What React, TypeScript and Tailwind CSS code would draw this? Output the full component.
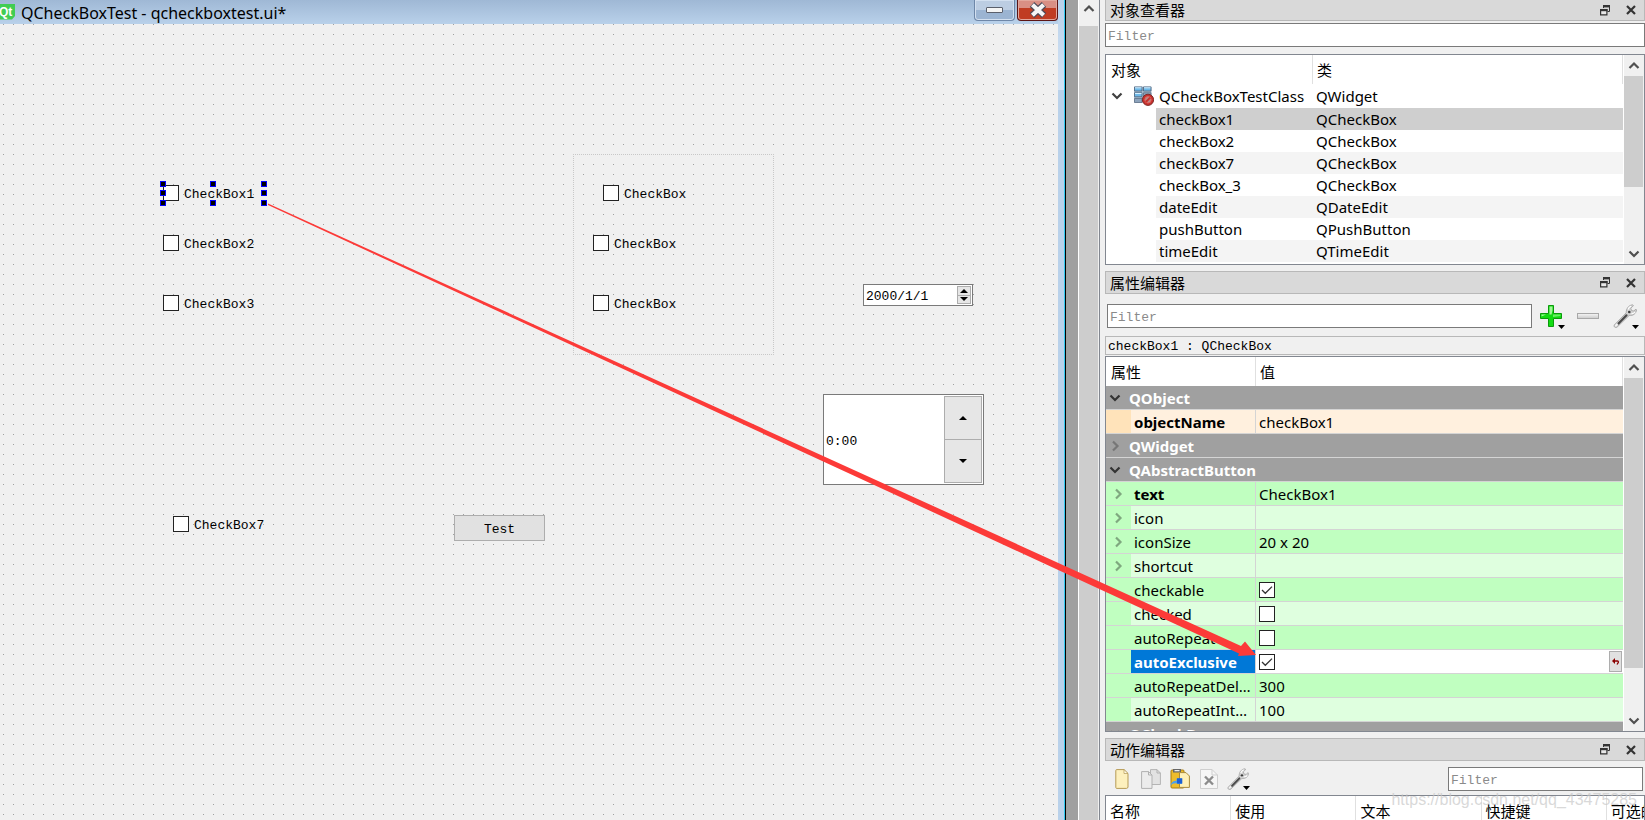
import type { ReactNode } from 'react'
import clsx from 'clsx'

const treeRows = [
    { name: 'checkBox1', cls: 'QCheckBox' },
    { name: 'checkBox2', cls: 'QCheckBox' },
    { name: 'checkBox7', cls: 'QCheckBox' },
    { name: 'checkBox_3', cls: 'QCheckBox' },
    { name: 'dateEdit', cls: 'QDateEdit' },
    { name: 'pushButton', cls: 'QPushButton' },
    { name: 'timeEdit', cls: 'QTimeEdit' },
]

interface PropertyRow {
    name: string
    value?: string
    checked?: boolean
    expandable?: boolean
    bold?: boolean
    selected?: boolean
}

const buttonProps: PropertyRow[] = [
    { name: 'text', value: 'CheckBox1', expandable: true, bold: true },
    { name: 'icon', expandable: true },
    { name: 'iconSize', value: '20 x 20', expandable: true },
    { name: 'shortcut', expandable: true },
    { name: 'checkable', checked: true },
    { name: 'checked', checked: false },
    { name: 'autoRepeat', checked: false },
    { name: 'autoExclusive', checked: true, selected: true },
    { name: 'autoRepeatDelay', value: '300' },
    { name: 'autoRepeatInterval', value: '100' },
]

const formCheckBoxes = [
    { id: 'cb1', label: 'CheckBox1', pos: 'left-[163px] top-[161px]' },
    { id: 'cb2', label: 'CheckBox2', pos: 'left-[163px] top-[211px]' },
    { id: 'cb3', label: 'CheckBox3', pos: 'left-[163px] top-[271px]' },
    { id: 'cb4', label: 'CheckBox', pos: 'left-[603px] top-[161px]' },
    { id: 'cb5', label: 'CheckBox', pos: 'left-[593px] top-[211px]' },
    { id: 'cb6', label: 'CheckBox', pos: 'left-[593px] top-[271px]' },
    { id: 'cb7', label: 'CheckBox7', pos: 'left-[173px] top-[492px]' },
]

const handles = [
    'left-[160px] top-[157px]',
    'left-[210px] top-[157px]',
    'left-[261px] top-[157px]',
    'left-[160px] top-[166px]',
    'left-[261px] top-[166px]',
    'left-[160px] top-[176px]',
    'left-[210px] top-[176px]',
    'left-[261px] top-[176px]',
]

const mono = "font-['Liberation_Mono',monospace] text-[13px]"

function Chevron({ dir, className }: { dir: 'up' | 'down' | 'right'; className?: string }) {
    const paths = {
        up: 'M1.5 8 6 3.5 10.5 8',
        down: 'M1.5 3.5 6 8 10.5 3.5',
        right: 'M4 1.5 8.5 6 4 10.5',
    }
    return (
        <svg viewBox="0 0 12 12" className={clsx('h-3 w-3 shrink-0', className)} aria-hidden="true">
            <path d={paths[dir]} fill="none" stroke="currentColor" strokeWidth="2.2" />
        </svg>
    )
}

function Tick({ id, checked, label }: { id?: string; checked?: boolean; label?: string }) {
    return (
        <span className="relative block h-4 w-4 shrink-0">
            <input
                id={id}
                type="checkbox"
                defaultChecked={checked}
                aria-label={label}
                className="peer block h-4 w-4 appearance-none border border-[#222] bg-white"
            />
            <svg
                viewBox="0 0 16 16"
                className="pointer-events-none absolute inset-0 hidden h-4 w-4 peer-checked:block"
                aria-hidden="true"
            >
                <path d="M3 8 6.3 11.3 13 4.6" fill="none" stroke="#333" strokeWidth="1.3" />
            </svg>
        </span>
    )
}

function ScrollBar({ thumb, end = true }: { thumb: string; end?: boolean }) {
    return (
        <div className="flex w-[21px] shrink-0 flex-col border-l border-white bg-[#f0f0f0] text-[#505050]">
            <button
                aria-label="Scroll up"
                className={clsx('flex shrink-0 justify-center', end ? 'h-[21px] items-center' : 'h-[26px] pt-[3px]')}
            >
                <Chevron dir="up" />
            </button>
            <div className="flex flex-1 flex-col">
                <div className={clsx('mr-px bg-[#cdcdcd]', thumb)} />
            </div>
            {end && (
                <button aria-label="Scroll down" className="flex h-[21px] shrink-0 items-center justify-center">
                    <Chevron dir="down" />
                </button>
            )}
        </div>
    )
}

function DockTitle({ title, first }: { title: string; first?: boolean }) {
    return (
        <div
            className={clsx(
                'flex shrink-0 items-center border border-[#b8b8b8] bg-[#d9d9d9] pr-2 pl-1',
                first ? 'h-[21px] border-t-0' : 'h-[23px]'
            )}
        >
            <h2 className="flex-1 text-[15px] leading-5">{title}</h2>
            <button aria-label="Float" className="mr-4">
                <svg viewBox="0 0 10 11" className="h-[11px] w-[10px]" aria-hidden="true">
                    <path d="M3.500 3V.8H9.500V6.500H7.500" fill="none" stroke="#333" strokeWidth="1" />
                    <path d="M3 0h7v2.400H3z" fill="#333" />
                    <path d="M.6 4.600h6.300v5.300H.6z" fill="#e8e8e8" stroke="#333" strokeWidth="1.200" />
                    <path d="M0 4h7.500v2.200H0z" fill="#333" />
                </svg>
            </button>
            <button aria-label="Close">
                <svg viewBox="0 0 10 10" className="h-[10px] w-[10px]" aria-hidden="true">
                    <path d="M1 1 9 9M9 1 1 9" stroke="#333" strokeWidth="2.2" />
                </svg>
            </button>
        </div>
    )
}

function FilterInput({ className }: { className?: string }) {
    return (
        <input
            type="text"
            placeholder="Filter"
            aria-label="Filter"
            className={clsx(
                mono,
                'h-6 min-w-0 border border-[#7a7a7a] bg-white pt-0.5 pl-0.5 outline-none placeholder:text-[#8a8a8a]',
                className
            )}
        />
    )
}

function DropArrow() {
    return (
        <svg viewBox="0 0 7 4" className="absolute right-1 bottom-0 h-1 w-[7px]" aria-hidden="true">
            <path d="M0 0h7L3.500 4z" fill="#000" />
        </svg>
    )
}

function ToolButton({ label, className, children }: { label: string; className: string; children: ReactNode }) {
    return (
        <button aria-label={label} className={clsx('relative flex h-[26px] items-center justify-center', className)}>
            {children}
        </button>
    )
}

function Wrench({ className }: { className: string }) {
    return (
        <svg viewBox="0 0 24 24" className={className} aria-hidden="true">
            <path
                d="M1.200 21 13.200 8.800C13 5 15.500 1.200 19.500.8L20.500 1.600 17.800 4.200 18.600 6.600 21 7 22.800 5 23.500 6C23.200 9.500 20 12 16.200 11.500L4 23.200C2.500 24.200.2 22.700 1.200 21z"
                fill="#d2d2d2"
                stroke="#9a9a9a"
                strokeWidth=".7"
            />
            <path d="M5.500 19.500 13.500 11.300" stroke="#4a4a4a" strokeWidth="2.200" strokeLinecap="round" />
            <path d="M2.800 21.600 4 20.400" stroke="#f6f6f6" strokeWidth="1.500" strokeLinecap="round" />
            <circle cx="16.300" cy="8" r="1.300" fill="#3a3a3a" />
            <path d="M15 5.500c.6-1.600 1.700-2.800 3.200-3.500M18.500 9.500c1.500.2 2.800-.4 3.600-1.500" fill="none" stroke="#fff" strokeWidth="1.200" />
        </svg>
    )
}

function SpinButtons({ className, arrow }: { className: string; arrow: string }) {
    return (
        <div className={clsx('flex shrink-0 flex-col border border-[#adadad] bg-[#e6e6e6]', className)}>
            <button aria-label="Step up" className="flex flex-1 items-center justify-center border-b border-[#adadad]">
                <svg viewBox="0 0 8 4" className={arrow} aria-hidden="true">
                    <path d="M0 4 4 0 8 4z" />
                </svg>
            </button>
            <button aria-label="Step down" className="flex flex-1 items-center justify-center">
                <svg viewBox="0 0 8 4" className={arrow} aria-hidden="true">
                    <path d="M0 0 4 4 8 0z" />
                </svg>
            </button>
        </div>
    )
}

function FormWindow() {
    return (
        <section className="flex min-w-0 flex-1 border-r border-black bg-[#b9d1ea]">
            <div className="flex min-w-0 flex-1 flex-col">
                <header className="flex h-6 shrink-0 items-start bg-linear-to-b from-[#9fb8d5] to-[#b9d1ea]">
                    <svg viewBox="0 0 15 16" className="mt-1 h-4 w-[15px]" aria-hidden="true">
                        <path d="M0 0h15v12l-3 3.500H0z" fill="#41cd52" />
                        <text x="-1" y="12" fontSize="12" fontWeight="700" fill="#fff" fontFamily="Liberation Sans">
                            Qt
                        </text>
                    </svg>
                    <h1 className="ml-1.5 flex-1 text-base leading-[26px]">QCheckBoxTest - qcheckboxtest.ui*</h1>
                    <button
                        aria-label="Minimize"
                        className="flex h-[21px] w-[41px] items-center justify-center rounded-b-sm border border-t-0 border-[#6e87a8] bg-linear-to-b from-[#bccde2] from-50% to-[#9bb4d2] to-50% shadow-[inset_0_0_0_1px_#d3e0f0]"
                    >
                        <span className="h-1.5 w-[17px] rounded-[1px] border border-[#5a5f6b] bg-[#f4f4f4]" />
                    </button>
                    <button
                        aria-label="Close"
                        className="ml-0.5 flex h-[21px] w-[41px] items-center justify-center rounded-b-sm border border-t-0 border-[#5b1414] bg-linear-to-b from-[#d98f84] from-40% to-[#c03c22] to-40% shadow-[inset_0_0_0_1px_#e2a89d]"
                    >
                        <svg viewBox="0 0 18 16" className="h-4 w-[18px]" aria-hidden="true">
                            <path d="M3 2.500 15 13.500M15 2.500 3 13.500" stroke="#4d4a58" strokeWidth="6.500" />
                            <path d="M3.400 2.800 14.600 13.200M14.600 2.800 3.400 13.200" stroke="#f5f5f5" strokeWidth="4.200" />
                        </svg>
                    </button>
                </header>

                <div
                    className={clsx(
                        mono,
                        'relative flex-1 bg-[#f0f0f0] bg-[linear-gradient(90deg,#f0f0f0_9px,transparent_9px),linear-gradient(#f0f0f0_9px,#a0a0a0_9px)] bg-size-[10px_10px] bg-position-[-6px_1px]'
                    )}
                >
                    <div className="absolute top-[130px] left-[573px] h-[201px] w-[201px] border border-dotted border-[#c8c8c8]" />
                    {formCheckBoxes.map((box) => (
                        <div key={box.id} className={clsx('absolute flex h-4 items-center gap-[5px]', box.pos)}>
                            <Tick id={box.id} />
                            <label htmlFor={box.id} className="pt-1">
                                {box.label}
                            </label>
                        </div>
                    ))}
                    {handles.map((pos) => (
                        <span key={pos} className={clsx('absolute h-1.5 w-1.5 border border-[#0000ff] bg-black', pos)} />
                    ))}

                    <div className="absolute top-[260px] left-[863px] flex h-[22px] w-[110px] border border-[#7a7a7a] bg-white p-px">
                        <input
                            type="text"
                            aria-label="Date"
                            defaultValue="2000/1/1"
                            className="min-w-0 flex-1 pt-1 pl-px outline-none"
                        />
                        <SpinButtons className="w-[14px]" arrow="h-1 w-2" />
                    </div>
                    <div className="absolute top-[370px] left-[823px] flex h-[91px] w-[161px] border border-[#7a7a7a] bg-white p-px">
                        <input
                            type="text"
                            aria-label="Time"
                            defaultValue="0:00"
                            className="min-w-0 flex-1 pt-1 pl-px outline-none"
                        />
                        <SpinButtons className="w-[38px]" arrow="h-1 w-2" />
                    </div>
                    <button className="absolute top-[491px] left-[454px] h-[26px] w-[91px] border border-[#adadad] bg-[#e1e1e1] pt-1">
                        Test
                    </button>
                </div>
            </div>
            <div className="w-[7px] shrink-0 border-r border-[#32c8f0] bg-linear-to-b from-[#b9d1ea] to-[#d3e3f5] bg-size-[100%_90px] bg-no-repeat" />
        </section>
    )
}

function ObjectInspector() {
    return (
        <>
            <DockTitle title="对象查看器" first />
            <FilterInput className="mt-0.5 shrink-0" />
            <div className="mt-[7px] flex h-[211px] shrink-0 overflow-hidden border border-[#828790] bg-white">
                <div className="min-w-0 flex-1">
                    <table className="w-full table-fixed border-separate border-spacing-0 text-[15px] leading-5">
                        <colgroup>
                            <col className="w-[50px]" />
                            <col className="w-[157px]" />
                            <col />
                        </colgroup>
                        <thead>
                            <tr className="h-[29px] text-left">
                                <th colSpan={2} className="border-r border-[#e0e0e0] pl-[5px] font-normal">
                                    对象
                                </th>
                                <th className="border-r border-[#e0e0e0] pl-1 font-normal">类</th>
                            </tr>
                        </thead>
                        <tbody>
                            <tr className="h-6">
                                <td>
                                    <div className="flex items-center justify-between pr-0.5 pl-[5px]">
                                        <Chevron dir="down" className="text-[#404040]" />
                                        <svg viewBox="0 0 20 20" className="h-5 w-5" aria-hidden="true">
                                            <path d="M0 .5h17.500v16H0z" fill="#a9bccf" />
                                            <g fill="#6fb9e8" stroke="#4c6178" strokeWidth=".8">
                                                <path d="M.5 1h7.500v4H.5zM9.500 1H17v4H9.500zM.5 6.800H8v4H.5z" />
                                            </g>
                                            <g fill="#8da3bb" stroke="#5d7086" strokeWidth=".8">
                                                <path d="M9.500 6.800H17v4H9.500zM.5 12.500H8v4H.5z" />
                                            </g>
                                            <path d="M1 1.800h6.500M10 1.800h6.500M1 7.500h6.500" stroke="#d6f0ff" />
                                            <circle cx="14" cy="13.800" r="5.600" fill="#c8302c" stroke="#7d2a28" />
                                            <circle cx="14" cy="13.800" r="3.200" fill="#b98a8a" stroke="#e0605a" strokeWidth="1" />
                                            <path d="m11.800 16 4.400-4.400" stroke="#c8302c" strokeWidth="2" />
                                        </svg>
                                    </div>
                                </td>
                                <td className="pl-[3px] whitespace-nowrap">QCheckBoxTestClass</td>
                                <td className="pl-[3px]">QWidget</td>
                            </tr>
                            {treeRows.map((row, i) => {
                                const bg = i === 0 ? 'bg-[#cfcfcf]' : i % 2 === 0 && 'bg-[#f4f4f4]'
                                return (
                                    <tr key={row.name} className="h-[22px]">
                                        <td />
                                        <td className={clsx('pl-[3px]', bg)}>{row.name}</td>
                                        <td className={clsx('pl-[3px]', bg)}>{row.cls}</td>
                                    </tr>
                                )
                            })}
                        </tbody>
                    </table>
                </div>
                <ScrollBar thumb="h-[111px]" />
            </div>
        </>
    )
}

function GroupRow({ name, open }: { name: string; open?: boolean }) {
    return (
        <tr className="h-6">
            <td colSpan={3} className="border-b border-[#d4d4d4] bg-[#a0a0a0]">
                <div className="flex items-center gap-2 pl-[3px] font-bold text-white">
                    <Chevron dir={open ? 'down' : 'right'} className={open ? 'text-[#333]' : 'text-[#777]'} />
                    {name}
                </div>
            </td>
        </tr>
    )
}

function PropertyEditor() {
    return (
        <>
            <div className="mt-1.5 shrink-0">
                <DockTitle title="属性编辑器" />
            </div>
            <div className="mt-[9px] flex shrink-0 items-center px-0.5">
                <FilterInput className="flex-1" />
                <ToolButton label="Add property" className="w-[37px]">
                    <svg viewBox="0 0 22 22" className="h-[22px] w-[22px]" aria-hidden="true">
                        <path d="M8.500.5h5v8h8v5h-8v8h-5v-8h-8v-5h8z" fill="#12dc12" stroke="#0b9a0b" />
                        <path d="M9.500 1.500h3v4l-1 4H6l-4.500 2V9.500h8z" fill="#a4f59a" />
                        <path d="M13 9.500h7.500V11L13 12z" fill="#6fee66" />
                    </svg>
                    <DropArrow />
                </ToolButton>
                <ToolButton label="Remove property" className="w-[37px]">
                    <span className="h-1.5 w-[22px] border border-[#a8a8a8] bg-linear-to-b from-[#f2f2f2] to-[#cfcfcf]" />
                </ToolButton>
                <ToolButton label="Configure" className="w-[37px]">
                    <Wrench className="h-6 w-6" />
                    <DropArrow />
                </ToolButton>
            </div>
            <div className={clsx(mono, 'mt-[7px] h-[19px] shrink-0 border border-[#b8b8b8] pl-0.5 leading-[19px] whitespace-pre')}>
                checkBox1 : QCheckBox
            </div>
            <div className="mt-px flex h-[376px] shrink-0 overflow-hidden border border-[#828790] bg-white">
                <div className="min-w-0 flex-1">
                    <table className="w-full table-fixed border-separate border-spacing-0 text-[15px] leading-5">
                        <colgroup>
                            <col className="w-[25px]" />
                            <col className="w-[125px]" />
                            <col />
                        </colgroup>
                        <thead>
                            <tr className="h-[29px] text-left">
                                <th colSpan={2} className="border-r border-[#e0e0e0] pl-[5px] font-normal">
                                    属性
                                </th>
                                <th className="border-r border-[#e0e0e0] pl-1 font-normal">值</th>
                            </tr>
                        </thead>
                        <tbody>
                            <GroupRow name="QObject" open />
                            <tr className="h-6">
                                <td className="border-b border-[#d4d4d4] bg-[#ffe3ba]" />
                                <td className="border-r border-b border-[#d4d4d4] bg-[#fff0de] pl-[3px] font-bold">
                                    objectName
                                </td>
                                <td className="border-b border-[#d4d4d4] bg-[#fff0de] pl-[3px]">checkBox1</td>
                            </tr>
                            <GroupRow name="QWidget" />
                            <GroupRow name="QAbstractButton" open />
                            {buttonProps.map((row, i) => {
                                const bg = row.selected
                                    ? 'bg-white'
                                    : i % 2 === 0
                                      ? 'bg-[#c0ffc0]'
                                      : 'bg-[#dfffdf]'
                                return (
                                    <tr key={row.name} className="h-6">
                                        <td className="border-b border-[#d4d4d4] bg-[#c0ffc0] pl-1.5">
                                            {row.expandable && <Chevron dir="right" className="text-[#7fa87f]" />}
                                        </td>
                                        <td
                                            className={clsx(
                                                'truncate border-r border-b border-[#d4d4d4] pr-1 pl-[3px]',
                                                row.selected ? 'bg-[#0078d7] text-white' : bg,
                                                (row.bold || row.selected) && 'font-bold'
                                            )}
                                        >
                                            {row.name}
                                        </td>
                                        <td className={clsx('border-b border-[#d4d4d4] pl-[3px]', bg)}>
                                            <div className="flex items-center justify-between">
                                                {row.value}
                                                {row.checked !== undefined && (
                                                    <Tick checked={row.checked} label={row.name} />
                                                )}
                                                {row.selected && (
                                                    <button
                                                        aria-label="Reset"
                                                        className="mr-px flex h-[21px] w-[13px] items-center justify-center border border-[#adadad] bg-[#e1e1e1]"
                                                    >
                                                        <svg viewBox="0 0 7 7" className="h-[7px] w-[7px]" aria-hidden="true">
                                                            <path d="M0 3 3 0v6z" fill="#8b0000" />
                                                            <path d="M2.500 3H5.500Q6.500 3 6.300 4.500L5 6.500" fill="none" stroke="#8b0000" strokeWidth="1.300" />
                                                        </svg>
                                                    </button>
                                                )}
                                            </div>
                                        </td>
                                    </tr>
                                )
                            })}
                            <GroupRow name="QCheckBox" open />
                        </tbody>
                    </table>
                </div>
                <ScrollBar thumb="h-[290px]" />
            </div>
        </>
    )
}

function ActionEditor() {
    return (
        <>
            <div className="mt-1.5 shrink-0">
                <DockTitle title="动作编辑器" />
            </div>
            <div className="mt-[5px] mb-[3px] flex shrink-0 items-center px-0.5">
                <ToolButton label="New" className="w-[29px]">
                    <svg viewBox="0 0 14 20" className="h-5 w-[14px]" aria-hidden="true">
                        <path d="M.8 1.500Q.8.6 1.700.6H9L13 4.500V18.500L11.500 19.400H1.700Q.8 19.400.8 18.500z" fill="#fdf0bd" stroke="#b59a55" />
                        <path d="M9 .6V4.500H13z" fill="#fffbe8" stroke="#b59a55" strokeWidth=".7" />
                    </svg>
                </ToolButton>
                <ToolButton label="Copy" className="w-[29px]">
                    <svg viewBox="0 0 20 20" className="h-5 w-5" aria-hidden="true">
                        <path d="M9.500.6H16L19.400 4V15.500H9.500z" fill="#e2e2e2" stroke="#b4b4b4" />
                        <path d="M.6 2.600H7.500L11 6V19.400H.6z" fill="#ececec" stroke="#b0b0b0" />
                        <path d="M7.500 2.600V6H11M16 .6V4H19.400" fill="none" stroke="#b0b0b0" />
                    </svg>
                </ToolButton>
                <ToolButton label="Paste" className="w-[29px]">
                    <svg viewBox="0 0 20 20" className="h-5 w-5" aria-hidden="true">
                        <rect x="1" y="1" width="13" height="18" rx="1" fill="#eebc2c" stroke="#a77d12" />
                        <path d="M3 0h8v3.500H3z" fill="#666" />
                        <path d="M4.500 1h5v1.300h-5z" fill="#eee" />
                        <path d="M9.500 3.600H16L19.400 7V18.400H9.500z" fill="#fff0b8" stroke="#a98a3e" />
                        <path d="M.8 16.500C1 13 3.500 11.500 6.500 11.700V9.500H12V14.800L8 15 6.500 14.500C4 14 2.200 15 .8 16.500z" fill="#4aa0ee" />
                        <path d="M7 9.300h5.300v5.300H7z" fill="#1c5fd6" />
                    </svg>
                </ToolButton>
                <ToolButton label="Delete" className="w-[29px]">
                    <svg viewBox="0 0 18 20" className="h-5 w-[18px]" aria-hidden="true">
                        <path d="M.5.5H12L17.500 6V19.500H.5z" fill="#f6f6f6" stroke="#cfcfcf" />
                        <path d="M12 .5V6H17.500" fill="none" stroke="#cfcfcf" />
                        <path d="m5 7.500 8 8M13 7.500 5 15.500" stroke="#8c8c8c" strokeWidth="2.400" />
                    </svg>
                </ToolButton>
                <ToolButton label="Configure" className="w-[29px]">
                    <Wrench className="h-[22px] w-[22px]" />
                    <svg viewBox="0 0 7 4" className="absolute right-0.5 bottom-0.5 h-1 w-[7px]" aria-hidden="true">
                        <path d="M0 0h7L3.500 4z" />
                    </svg>
                </ToolButton>
                <FilterInput className="ml-auto w-[195px]" />
            </div>
            <div className="flex-1 overflow-hidden border border-b-0 border-[#828790] bg-white">
                <table className="w-[626px] table-fixed border-separate border-spacing-0 text-[15px] leading-5">
                    <thead>
                        <tr className="h-[29px] text-left">
                            {['名称', '使用', '文本', '快捷键', '可选的'].map((head) => (
                                <th key={head} className="border-r border-[#e0e0e0] pl-1 font-normal">
                                    {head}
                                </th>
                            ))}
                        </tr>
                    </thead>
                </table>
            </div>
        </>
    )
}

export default function App() {
    return (
        <div className="relative flex h-screen overflow-hidden bg-[#a0a0a0] font-['Noto_Sans','Noto_Sans_CJK_SC',sans-serif] text-black">
            <FormWindow />
            <div className="ml-3 flex border-r border-[#828790]">
                <ScrollBar thumb="flex-1" end={false} />
            </div>
            <aside className="flex w-[545px] shrink-0 flex-col bg-[#f0f0f0] pl-[5px]">
                <ObjectInspector />
                <PropertyEditor />
                <ActionEditor />
            </aside>

            <svg
                viewBox="0 0 1645 820"
                className="pointer-events-none absolute top-0 right-0 h-[820px] w-[1645px]"
                aria-hidden="true"
            >
                <path d="M268 203.500 1241 646 1245 641.500 1256 655 1238 656 1239 653.500 268 205z" fill="#fc3a38" />
            </svg>
            <p className="pointer-events-none absolute right-2 bottom-2 font-['Liberation_Sans',sans-serif] text-base leading-6 text-[#c8c8c8]/70">
                https://blog.csdn.net/qq_43475285
            </p>
        </div>
    )
}
